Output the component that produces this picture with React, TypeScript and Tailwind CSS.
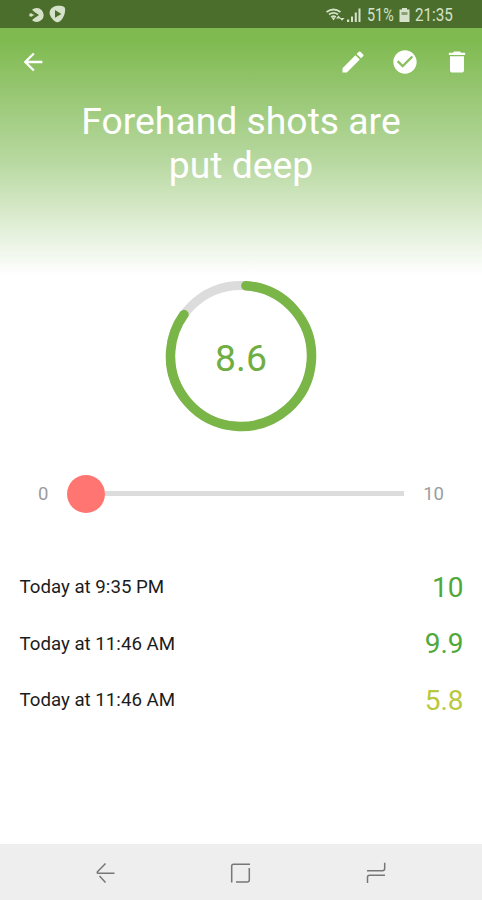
import { MdArrowBack, MdCheckCircle, MdDelete, MdEdit } from 'react-icons/md'

const scores = [
  { id: 1, date: 'Today at 9:35 PM', value: '10', color: 'text-[#4fa83a]' },
  { id: 2, date: 'Today at 11:46 AM', value: '9.9', color: 'text-[#4fa83a]' },
  { id: 3, date: 'Today at 11:46 AM', value: '5.8', color: 'text-[#b9c83c]' },
]

function StatusBar() {
  return (
    <div className="flex h-7 items-center bg-[#4b6e2c] pl-[29px] pr-[29px] text-[#d5e2c9]">
      <svg className="mt-px" width="15" height="16" viewBox="0 0 15 16" fill="currentColor">
        <path d="M3 2.800A7 7 0 1 1 3 13.200L5.500 11L10 8L5.500 5Z" />
        <circle cx="2" cy="8" r="1.800" />
        <path d="M2 7L6 8L2 9Z" />
      </svg>
      <svg className="ml-[5px]" width="17" height="18" viewBox="0 0 17 18">
        <path
          d="M8.500 .8C11 .6 14 1 15.500 2.300C17 4.500 15.800 10 13.500 13.500C12 16 10 17.400 8 17.300C5.500 17 1.500 12.500 .7 9C.2 5 3 1.200 8.500 .8Z"
          fill="currentColor"
        />
        <path d="M6 5L12.300 9L6 12.800Z" fill="#4b6e2c" />
      </svg>

      <div className="ml-auto flex items-center">
        <svg className="mt-[3px]" width="19" height="16" viewBox="0 0 19 16" fill="none" stroke="currentColor" strokeWidth="1.800">
          <path d="M.5 4Q7.500 -1 14.500 4M3 6.500Q7.500 3.200 12 6.500M5.200 9Q7.500 7.500 9.800 9" />
          <path d="M5.500 9.500H9.500L7.500 12.500Z" fill="currentColor" stroke="none" />
          <path d="M12.500 7.500L15 10.500H10ZM16 12.800L13.500 10H18.500Z" fill="currentColor" stroke="none" />
        </svg>
        <svg className="ml-[2px] mt-[3px]" width="14" height="15" viewBox="0 0 14 15" fill="currentColor">
          <path d="M0 11.500H2.200V14H0ZM4 8.500H6V14H4ZM7.800 4.500H9.800V14H7.800ZM11.500 .5H13.500V14H11.500Z" />
        </svg>
        <span className="ml-1.5 w-[27px] origin-left scale-x-[0.82] whitespace-nowrap text-[17.5px] leading-7 pt-[2px]">
          51%
        </span>
        <svg className="ml-[5px] mt-[2px]" width="11" height="14" viewBox="0 0 11 14" fill="currentColor">
          <path d="M3 0H8V1.500H10.500V14H.5V1.500H3Z" />
          <path d="M2.500 4H8.500V7H2.500Z" fill="#4b6e2c" opacity=".55" />
        </svg>
        <span className="ml-[5px] w-[38px] origin-left scale-x-[0.87] whitespace-nowrap text-[17.5px] leading-7 pt-[2px]">
          21:35
        </span>
      </div>
    </div>
  )
}

function Header() {
  return (
    <header className="h-[252px] bg-linear-to-b/srgb from-[#7fba50] from-5% via-[#b9d9a2] via-54% to-white to-98% text-white">
      <div className="flex h-[68px] items-center pl-[19px] pr-[11px]">
        <button>
          <MdArrowBack size={28} />
        </button>
        <div className="ml-auto flex gap-[24px]">
          <button>
            <MdEdit size={28} />
          </button>
          <button>
            <MdCheckCircle size={28} />
          </button>
          <button>
            <MdDelete size={28} />
          </button>
        </div>
      </div>
      <h1 className="mt-[3px] text-center text-[37.3px] leading-[44px]">
        Forehand shots are
        <br />
        put deep
      </h1>
    </header>
  )
}

function ScoreRing() {
  return (
    <div className="grid h-[152px] w-[152px] place-items-center self-center">
      <svg className="col-start-1 row-start-1" width="152" height="152" viewBox="0 0 152 152" fill="none">
        <circle cx="76" cy="76" r="70.500" stroke="#dcdcdc" strokeWidth="9" />
        <circle
          cx="76"
          cy="76"
          r="70.500"
          stroke="#7ab548"
          strokeWidth="9.500"
          strokeLinecap="round"
          pathLength="360"
          strokeDasharray="302 360"
          transform="rotate(-86 76 76)"
        />
      </svg>
      <span className="col-start-1 row-start-1 mt-[6px] text-[37.3px] leading-none text-[#70ad42]">8.6</span>
    </div>
  )
}

function Slider() {
  return (
    <div className="mt-[42px] flex h-[39px] items-center pl-[38px] pr-[38px] text-[18.500px] text-[#9c9c9c]">
      <span className="w-[29px] pt-[3px]">0</span>
      <div className="flex flex-1 items-center">
        <div className="h-[38px] w-[38px] rounded-full bg-[#ff7572]" />
        <div className="h-[5px] flex-1 bg-[#dcdcdc]" />
      </div>
      <span className="w-[40px] pt-[3px] text-right">10</span>
    </div>
  )
}

function NavBar() {
  return (
    <nav className="mt-auto flex h-14 items-center justify-between bg-[#eeeeee] pl-[94px] pr-[94px] text-[#777777]">
      <svg width="24" height="24" viewBox="0 0 24 24" fill="none" stroke="currentColor" strokeWidth="1.500">
        <path d="M11.500 3.500L3.500 11.700Q2.800 12.900 4 13.300H20.500M5.500 16L11.500 22.500" />
      </svg>
      <svg width="24" height="24" viewBox="0 0 24 24" fill="none" stroke="currentColor" strokeWidth="1.500">
        <path d="M2.700 22.500V6Q2.700 4.200 4.500 4.200H21M20.300 8V20Q20.300 22 18 22H7" />
      </svg>
      <svg width="24" height="24" viewBox="0 0 24 24" fill="none" stroke="currentColor" strokeWidth="1.500">
        <path d="M3 10.800H18.500Q20.700 10.800 20.700 8.600V2.800M21 15.300H5.500Q3.500 15.300 3.500 17.300V23" />
      </svg>
    </nav>
  )
}

export default function App() {
  return (
    <div className="flex h-[900px] w-[482px] flex-col overflow-hidden bg-white font-['Roboto',sans-serif]">
      <StatusBar />
      <Header />
      <ScoreRing />
      <Slider />
      <ul className="mt-[46px] pl-[19.500px] pr-[18.500px]">
        {scores.map((score) => (
          <li key={score.id} className="flex h-[56.500px] items-center justify-between">
            <span className="text-[18.700px] text-[#1c1c1c]">{score.date}</span>
            <span className={`pt-px text-[28px] ${score.color}`}>{score.value}</span>
          </li>
        ))}
      </ul>
      <NavBar />
    </div>
  )
}
